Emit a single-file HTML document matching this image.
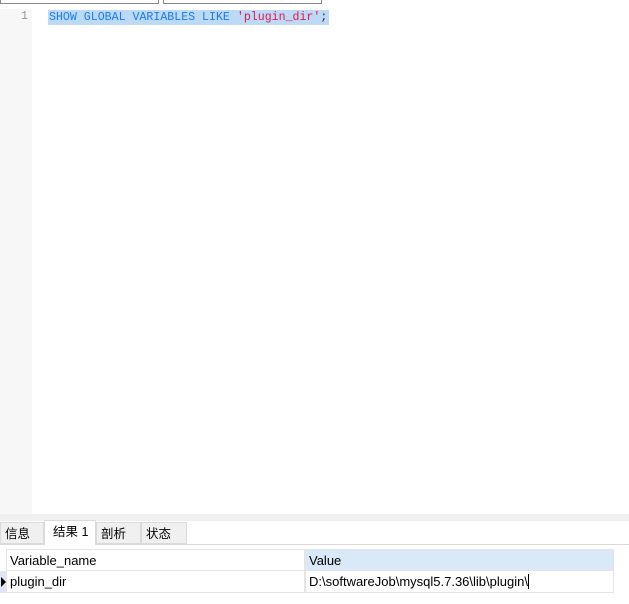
<!DOCTYPE html>
<html><head><meta charset="utf-8"><style>
body{margin:0;width:629px;height:604px;background:#fff;position:relative;overflow:hidden;font-family:"Liberation Sans","Noto Sans CJK SC",sans-serif}
.a{position:absolute}
.mono{font-family:"Liberation Mono","DejaVu Sans Mono",monospace;font-size:11.6px}
.tab{position:absolute;top:522px;height:22px;background:#f0f0f0;border:1px solid #dadada;box-sizing:border-box;font-size:12.5px;line-height:22px;padding-left:4px;color:#000}
.c{font-size:13px}
</style></head><body>
<div class="a" style="left:0;top:0;width:159px;height:4px;border:1px solid #888;border-top:none;box-sizing:border-box"></div>
<div class="a" style="left:163px;top:0;width:159px;height:4px;border:1px solid #888;border-top:none;box-sizing:border-box"></div>
<div class="a" style="left:0;top:9px;width:32px;height:505px;background:#f7f7f7"></div>
<div class="a mono" style="left:21px;top:10px;line-height:14px;color:#999">1</div>
<div class="a" style="left:48px;top:10px;width:281px;height:15px;background:#bcd9f5"></div>
<div class="a mono" style="left:49px;top:10px;line-height:15px;color:#1a7cf0;white-space:pre">SHOW GLOBAL VARIABLES LIKE <span style="color:#e8174a">'plugin_dir'</span><span style="color:#333">;</span></div>
<div class="a" style="left:0;top:514px;width:629px;height:7px;background:#f0f0f0"></div>
<div class="a" style="left:0;top:544px;width:629px;height:1px;background:#dadada"></div>
<div class="tab" style="left:0;width:44px">信息</div>
<div class="tab" style="left:44px;width:52px;top:520px;height:25px;background:#fff;border-bottom:none;padding-left:8px">结果 1</div>
<div class="tab" style="left:96px;width:45px">剖析</div>
<div class="tab" style="left:141px;width:46px">状态</div>
<div class="a c" style="left:6px;top:549px;width:299px;height:22px;border:1px solid #e4e4e4;box-sizing:border-box;line-height:21px;padding-left:3px">Variable_name</div>
<div class="a c" style="left:305px;top:549px;width:309px;height:22px;background:#d9e9f7;border:1px solid #e4e4e4;box-sizing:border-box;line-height:21px;padding-left:3px">Value</div>
<div class="a c" style="left:6px;top:571px;width:299px;height:22px;border:1px solid #e4e4e4;border-top:none;box-sizing:border-box;line-height:21px;padding-left:3px">plugin_dir</div>
<div class="a c" style="left:305px;top:571px;width:309px;height:22px;border:1px solid #e4e4e4;border-top:none;box-sizing:border-box;line-height:21px;padding-left:3px">D:\softwareJob\mysql5.7.36\lib\plugin\<span style="display:inline-block;width:1px;height:15px;background:#000;vertical-align:-3px"></span></div>
<div class="a" style="left:0;top:571px;width:6px;height:22px;background:#dfe8f2"></div>
<div class="a" style="left:1px;top:577px;width:0;height:0;border-left:5px solid #000;border-top:5px solid transparent;border-bottom:5px solid transparent"></div>
</body></html>
